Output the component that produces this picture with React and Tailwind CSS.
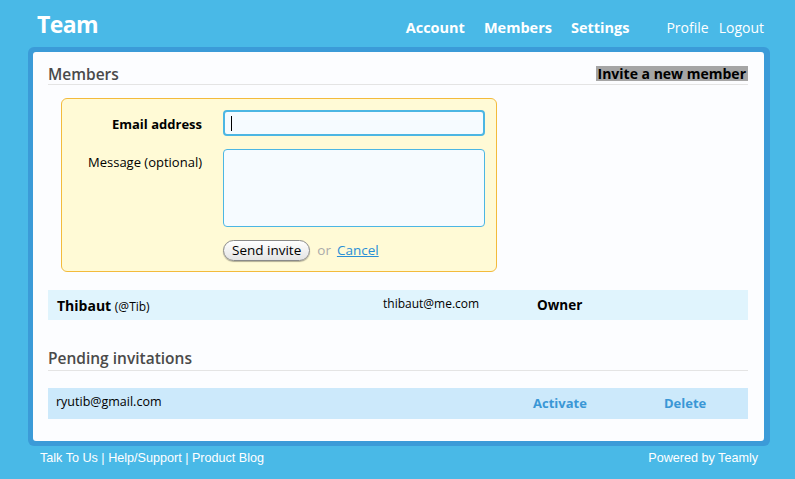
import React from "react";

const font = { fontFamily: "'Open Sans', 'Liberation Sans', sans-serif" };

const Header = () => (
  <div className="flex items-start h-[47px] pl-[37px] pr-[31px] text-white">
    <div className="text-[23px] font-bold tracking-tight leading-[30px] pt-[9px]">Team</div>
    <div className="ml-auto flex items-center text-[14.5px] font-bold leading-[20px] pt-[18px]">
      <a className="mr-[19px]">Account</a>
      <a className="mr-[19px]">Members</a>
      <a>Settings</a>
    </div>
    <div className="ml-[37px] flex items-center text-[14px] gap-[10px] leading-[20px] pt-[18px]">
      <a>Profile</a>
      <a>Logout</a>
    </div>
  </div>
);

const InviteForm = () => (
  <div className="ml-[13px] mt-[13px] w-[436px] h-[174px] bg-[#fffad6] border border-[#f3bb3c] rounded-[6px] pt-[11px]">
    <div className="flex">
      <label className="w-[140px] text-right text-[13px] font-bold text-black pt-[5px]">
        Email address
      </label>
      <div className="ml-[21px] w-[262px] h-[26px] border-2 border-[#4cb6e3] rounded-[4px] bg-[#f6fbff] flex items-center pl-[6px]">
        <span className="w-[1px] h-[15px] bg-black"></span>
      </div>
    </div>
    <div className="flex mt-[13px]">
      <label className="w-[140px] text-right text-[13px] text-black pt-[4px]">
        Message (optional)
      </label>
      <div className="ml-[21px] w-[262px] h-[78px] border border-[#4cb6e3] rounded-[4px] bg-[#f6fbff]"></div>
    </div>
    <div className="flex items-center ml-[161px] mt-[13px] text-[13.5px]">
      <button className="h-[21px] px-[8px] rounded-full border border-[#8a8a8a] bg-gradient-to-b from-white to-[#e4e4e4] text-black shadow-[0_1px_1px_rgba(0,0,0,0.3)] leading-none">
        Send invite
      </button>
      <span className="ml-[7px] text-[#aaa]">or</span>
      <a className="ml-[6px] text-[#2a8fd6] underline">Cancel</a>
    </div>
  </div>
);

const App = () => (
  <div className="w-[795px] h-[479px] bg-[#49b9e7] overflow-hidden" style={font}>
    <Header />
    <div className="ml-[28px] w-[742px] h-[399px] bg-[#3b9bd8] rounded-[6px] p-[5px] pr-[6px]">
      <div className="bg-[#fcfdff] h-full rounded-[3px] pl-[15px] pr-[16px] pt-[10px]">
        <div className="flex items-end border-b border-[#e4e4e4] h-[23px] pb-[2px]">
          <h2 className="text-[15.5px] font-semibold text-[#4a4a4a] leading-none">Members</h2>
          <span className="ml-auto bg-[#a5a5a5] text-black text-[14px] font-bold leading-[15px] px-[2px] mb-[1px]">
            Invite a new member
          </span>
        </div>
        <InviteForm />
        <div className="mt-[18px] h-[30px] bg-[#e0f4fd] flex items-center text-black">
          <div className="w-[335px] pl-[9px] text-[14px]">
            <span className="font-bold">Thibaut</span>{" "}
            <span className="text-[12px]">(@Tib)</span>
          </div>
          <div className="w-[154px] text-[12px] -mt-[2px]">thibaut@me.com</div>
          <div className="text-[13.5px] font-bold">Owner</div>
        </div>
        <div className="mt-[28px] border-b border-[#e4e4e4] pb-[2px]">
          <h2 className="text-[15.5px] font-semibold text-[#4a4a4a] leading-[20px]">
            Pending invitations
          </h2>
        </div>
        <div className="mt-[17px] h-[31px] bg-[#cce9fb] flex items-center">
          <div className="w-[485px] pl-[8px] text-[12.5px] text-black -mt-[2px]">ryutib@gmail.com</div>
          <a className="w-[131px] text-[13px] font-bold text-[#3a97d6]">Activate</a>
          <a className="text-[13px] font-bold text-[#3a97d6]">Delete</a>
        </div>
      </div>
    </div>
    <div
      className="flex items-center h-[24px] pl-[40px] pr-[37px] text-white text-[12.6px]"
      style={{ fontFamily: "'Liberation Sans', Arial, sans-serif" }}
    >
      <span>Talk To Us | Help/Support | Product Blog</span>
      <span className="ml-auto">Powered by Teamly</span>
    </div>
  </div>
);

export default App;
